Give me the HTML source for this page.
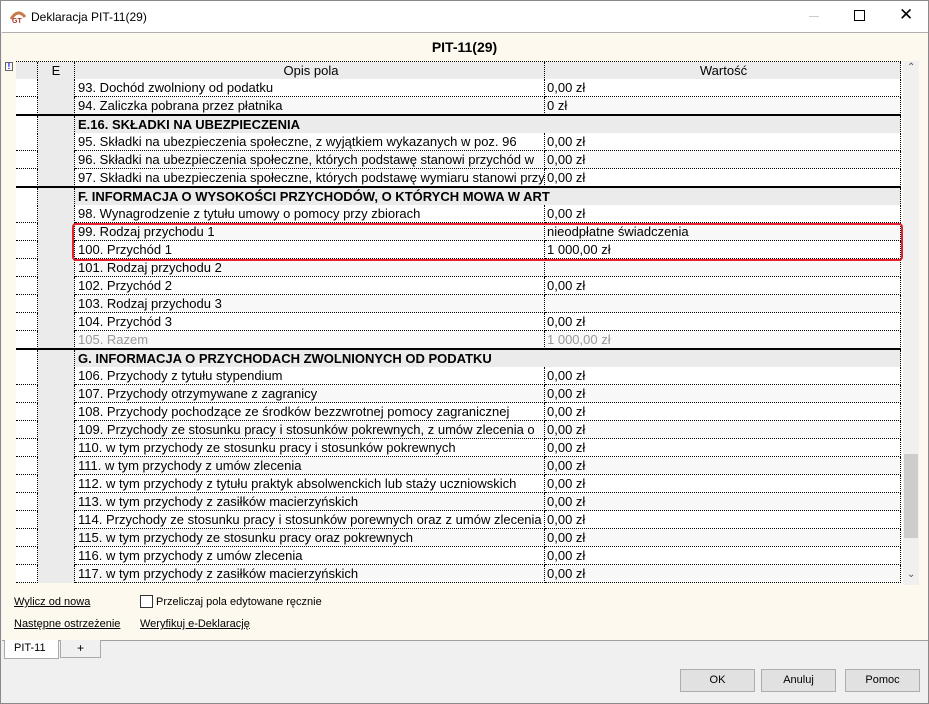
<!DOCTYPE html>
<html><head><meta charset="utf-8"><style>
*{margin:0;padding:0;box-sizing:border-box}
body{width:929px;height:704px;position:relative;background:#f0f0f0;font-family:"Liberation Sans",sans-serif;overflow:hidden}
.win{position:absolute;left:0;top:0;width:929px;height:704px;border:1px solid #8a8a8a}
.title{position:absolute;left:0;top:0;width:927px;height:31px;background:#fff;font-size:12px}
.cream{position:absolute;left:1px;top:31px;width:926px;height:609px;background:#fdf9ee;border-top:1px solid #b0b0b0;border-bottom:1px solid #a0a0a0}
.h{position:absolute;left:0;width:927px;top:38px;text-align:center;font-weight:bold;font-size:14px}
.r{position:absolute;left:15px;width:885px;height:18px;font-size:13px;line-height:17px}
.r div{position:absolute;top:0;height:18px;border-bottom:1px dotted #000;white-space:nowrap;overflow:hidden}
.c1{left:0;width:22px;background:#fff;border-right:1px dotted #000}
.ce{left:22px;width:37px;background:#ebebeb;border-right:1px dotted #000;border-bottom:none!important}
.co{left:59px;width:470px;padding-left:3px;border-right:1px dotted #000}
.cv{left:529px;width:356px;padding-left:2px;border-right:1px dotted #000}
.w .co,.w .cv{background:#fff}.g .co,.g .cv{background:#f8f8f8}
.s .co{width:826px;background:#ebebeb;font-weight:bold;border-right:1px dotted #000}
.s{border-top:2px solid #000}
.gr{color:#999}
.lnk{position:absolute;font-size:11px;text-decoration:underline}
.btn{position:absolute;top:668px;width:75px;height:23px;border:1px solid #adadad;background:#e1e1e1;font-size:11px;text-align:center;line-height:21px}
</style></head><body>
<div class="win">
<div class="title">
<svg style="position:absolute;left:9px;top:9px" width="16" height="14" viewBox="0 0 16 14"><path d="M1 9 Q8 -2 15 7" stroke="#c87a4a" stroke-width="3" fill="none"/><text x="2" y="13" font-size="7" font-weight="bold" fill="#a33" font-family="Liberation Sans">GT</text></svg>
<span style="position:absolute;left:30px;top:9px">Deklaracja PIT-11(29)</span>
<div style="position:absolute;left:808px;top:15px;width:10px;height:1px;background:#ccc"></div>
<div style="position:absolute;left:853px;top:9px;width:11px;height:11px;border:1px solid #000"></div>
<span style="position:absolute;left:898px;top:4px;font-size:17px">✕</span>
</div>
<div class="cream"></div>
<div class="h">PIT-11(29)</div>
<div style="position:absolute;left:4px;top:61px;width:8px;height:9px;border:1px solid #666;background:#fff;color:#00f;font-size:8px;font-weight:bold;line-height:7px;text-align:center">!</div>
<div class="r" style="top:60px;border-top:1px dotted #000;height:18px"><div class="c1" style="background:#ebebeb"></div><div class="ce" style="border-bottom:1px dotted #000!important;text-align:center">E</div><div class="co" style="background:#ebebeb;text-align:center">Opis pola</div><div class="cv" style="background:#ebebeb;text-align:center">Wartość</div></div>
<div id="rows"></div>
<div style="position:absolute;left:902px;top:60px;width:16px;height:524px;background:#f0f0f0"><div style="position:absolute;left:1px;top:393px;width:14px;height:84px;background:#cdcdcd"></div><span style="position:absolute;left:4px;top:1px;font-size:10px;color:#555">⌃</span><span style="position:absolute;left:4px;top:508px;font-size:10px;color:#555">⌄</span></div>
<div style="position:absolute;left:71px;top:222px;width:831px;height:38px;border:2px solid #e8202a;border-radius:4px"></div>
<span class="lnk" style="left:13px;top:595px">Wylicz od nowa</span>
<div style="position:absolute;left:139px;top:594px;width:13px;height:13px;border:1px solid #333;background:#fff"></div>
<span style="position:absolute;left:155px;top:595px;font-size:11px">Przeliczaj pola edytowane ręcznie</span>
<span class="lnk" style="left:13px;top:617px">Następne ostrzeżenie</span>
<span class="lnk" style="left:139px;top:617px">Weryfikuj e-Deklarację</span>
<div style="position:absolute;left:3px;top:639px;width:55px;height:19px;background:#fff;border:1px solid #aaa;border-top:none;font-size:11px;line-height:17px;padding-left:9px">PIT-11</div>
<div style="position:absolute;left:59px;top:639px;width:41px;height:18px;background:#f0f0f0;border:1px solid #aaa;border-top:none;font-size:12px;text-align:center;line-height:17px">+</div>
<div class="btn" style="left:679px">OK</div>
<div class="btn" style="left:760px">Anuluj</div>
<div class="btn" style="left:844px">Pomoc</div>
</div>
<script>
var d=[["93. Dochód zwolniony od podatku","0,00 zł"],["94. Zaliczka pobrana przez płatnika","0 zł"],["S","E.16. SKŁADKI NA UBEZPIECZENIA"],["95. Składki na ubezpieczenia społeczne, z wyjątkiem wykazanych w poz. 96","0,00 zł"],["96. Składki na ubezpieczenia społeczne, których podstawę stanowi przychód w","0,00 zł"],["97. Składki na ubezpieczenia społeczne, których podstawę wymiaru stanowi przychód","0,00 zł"],["S","F. INFORMACJA O WYSOKOŚCI PRZYCHODÓW, O KTÓRYCH MOWA W ART"],["98. Wynagrodzenie z tytułu umowy o pomocy przy zbiorach","0,00 zł"],["99. Rodzaj przychodu 1","nieodpłatne świadczenia"],["100. Przychód 1","1 000,00 zł"],["101. Rodzaj przychodu 2",""],["102. Przychód 2","0,00 zł"],["103. Rodzaj przychodu 3",""],["104. Przychód 3","0,00 zł"],["G","105. Razem","1 000,00 zł"],["S","G. INFORMACJA O PRZYCHODACH ZWOLNIONYCH OD PODATKU"],["106. Przychody z tytułu stypendium","0,00 zł"],["107. Przychody otrzymywane z zagranicy","0,00 zł"],["108. Przychody pochodzące ze środków bezzwrotnej pomocy zagranicznej","0,00 zł"],["109. Przychody ze stosunku pracy i stosunków pokrewnych, z umów zlecenia o","0,00 zł"],["110. w tym przychody ze stosunku pracy i stosunków pokrewnych","0,00 zł"],["111. w tym przychody z umów zlecenia","0,00 zł"],["112. w tym przychody z tytułu praktyk absolwenckich lub staży uczniowskich","0,00 zł"],["113. w tym przychody z zasiłków macierzyńskich","0,00 zł"],["114. Przychody ze stosunku pracy i stosunków porewnych oraz z umów zlecenia","0,00 zł"],["115. w tym przychody ze stosunku pracy oraz pokrewnych","0,00 zł"],["116. w tym przychody z umów zlecenia","0,00 zł"],["117. w tym przychody z zasiłków macierzyńskich","0,00 zł"]];
var h="",y=78,k=0;
d.forEach(function(e){
if(e[0]=="S"){h+='<div class="r s" style="top:'+(y-1)+'px;height:19px"><div class="c1"></div><div class="ce"></div><div class="co">'+e[1]+'</div></div>';k=0;}
else{var gr=e[0]=="G";var a=gr?e[1]:e[0],b=gr?e[2]:e[1];h+='<div class="r '+(k%2?'g':'w')+'" style="top:'+y+'px"><div class="c1"></div><div class="ce"></div><div class="co'+(gr?' gr':'')+'">'+a+'</div><div class="cv'+(gr?' gr':'')+'">'+b+'</div></div>';k++;}
y+=18;});
document.getElementById("rows").outerHTML=h;
</script>
</body></html>
